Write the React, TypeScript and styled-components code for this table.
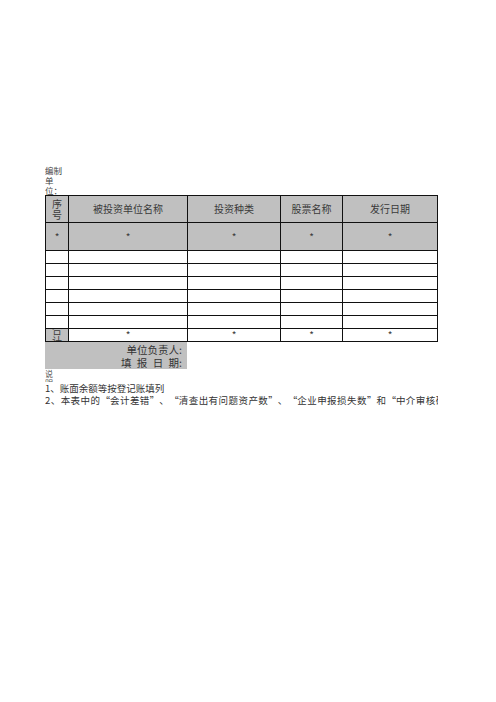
import React from "react";
import styled, { createGlobalStyle } from "styled-components";

const GlobalStyle = createGlobalStyle`
  html, body {
    margin: 0;
    padding: 0;
    background: #fff;
  }
  body {
    font-family: "Noto Sans CJK SC", "Liberation Serif", serif;
    color: #333;
  }
`;

const Sheet = styled.div`
  width: 393px;
  margin-left: 45px;
  padding-top: 165px;
  overflow: hidden;
`;

const Caption = styled.div`
  width: 23px;
  height: 30px;
  font-size: 8.5px;
  line-height: 10px;
  color: #444;
`;

const Grid = styled.div`
  display: grid;
  grid-template-columns: 22px 118px 92px 61px 94px;
  grid-template-rows: 26px 27px repeat(7, 12px);
  gap: 1px;
  padding: 1px;
  background: #111;
  width: max-content;
`;

const Cell = styled.div<{ $shade?: boolean }>`
  background: ${(p) => (p.$shade ? "#c0c0c0" : "#fff")};
  display: flex;
  align-items: center;
  justify-content: center;
  overflow: hidden;
  font-size: 10px;
  line-height: 10px;
  color: #3a3a3a;
  white-space: nowrap;
`;

const Stack = styled.div`
  display: flex;
  flex-direction: column;
  align-items: center;
  font-size: 10px;
  line-height: 11px;
`;

const Signature = styled.div`
  width: 142px;
  height: 27px;
  background: #c0c0c0;
  display: flex;
  flex-direction: column;
  align-items: flex-end;
  justify-content: center;
  padding-right: 5px;
  box-sizing: border-box;
  font-size: 10.5px;
  line-height: 13px;
  color: #333;
`;

const Spaced = styled.span`
  word-spacing: 3px;
`;

const NoteLabel = styled.div`
  height: 13px;
  overflow: hidden;
  font-size: 8px;
  line-height: 9px;
  color: #555;
`;

const NoteLine = styled.div<{ $wide?: boolean }>`
  font-size: 9.5px;
  line-height: 12px;
  white-space: nowrap;
  letter-spacing: ${(p) => (p.$wide ? "0.45px" : "0")};
  color: #333;
`;

const Quote = styled.span<{ $close?: boolean }>`
  display: inline-block;
  width: 1em;
  text-align: ${(p) => (p.$close ? "left" : "right")};
`;

const headers = ["被投资单位名称", "投资种类", "股票名称", "发行日期"];

const Quoted = ({ children }: { children: React.ReactNode }) => (
  <>
    <Quote>“</Quote>
    {children}
    <Quote $close>”</Quote>
  </>
);

export default function App() {
  return (
    <>
      <GlobalStyle />
      <Sheet>
        <Caption>
          编制
          <br />
          单
          <br />
          位：
        </Caption>
        <Grid>
          <Cell $shade>
            <Stack>
              <span>序</span>
              <span>号</span>
            </Stack>
          </Cell>
          {headers.map((h) => (
            <Cell $shade key={h}>
              {h}
            </Cell>
          ))}
          {[0, 1, 2, 3, 4].map((i) => (
            <Cell $shade key={"s" + i}>
              *
            </Cell>
          ))}
          {Array.from({ length: 30 }).map((_, i) => (
            <Cell key={"e" + i} />
          ))}
          <Cell $shade>
            <Stack>
              <span>合</span>
              <span>计</span>
            </Stack>
          </Cell>
          {[0, 1, 2, 3].map((i) => (
            <Cell key={"t" + i}>*</Cell>
          ))}
        </Grid>
        <Signature>
          <span>单位负责人:</span>
          <Spaced>填 报 日 期:</Spaced>
        </Signature>
        <NoteLabel>
          说
          <br />
          明
        </NoteLabel>
        <NoteLine>1、账面余额等按登记账填列</NoteLine>
        <NoteLine $wide>
          2、本表中的<Quoted>会计差错</Quoted>、<Quoted>清查出有问题资产数</Quoted>、
          <Quoted>企业申报损失数</Quoted>和<Quoted>中介审核确认数</Quoted>
        </NoteLine>
      </Sheet>
    </>
  );
}
